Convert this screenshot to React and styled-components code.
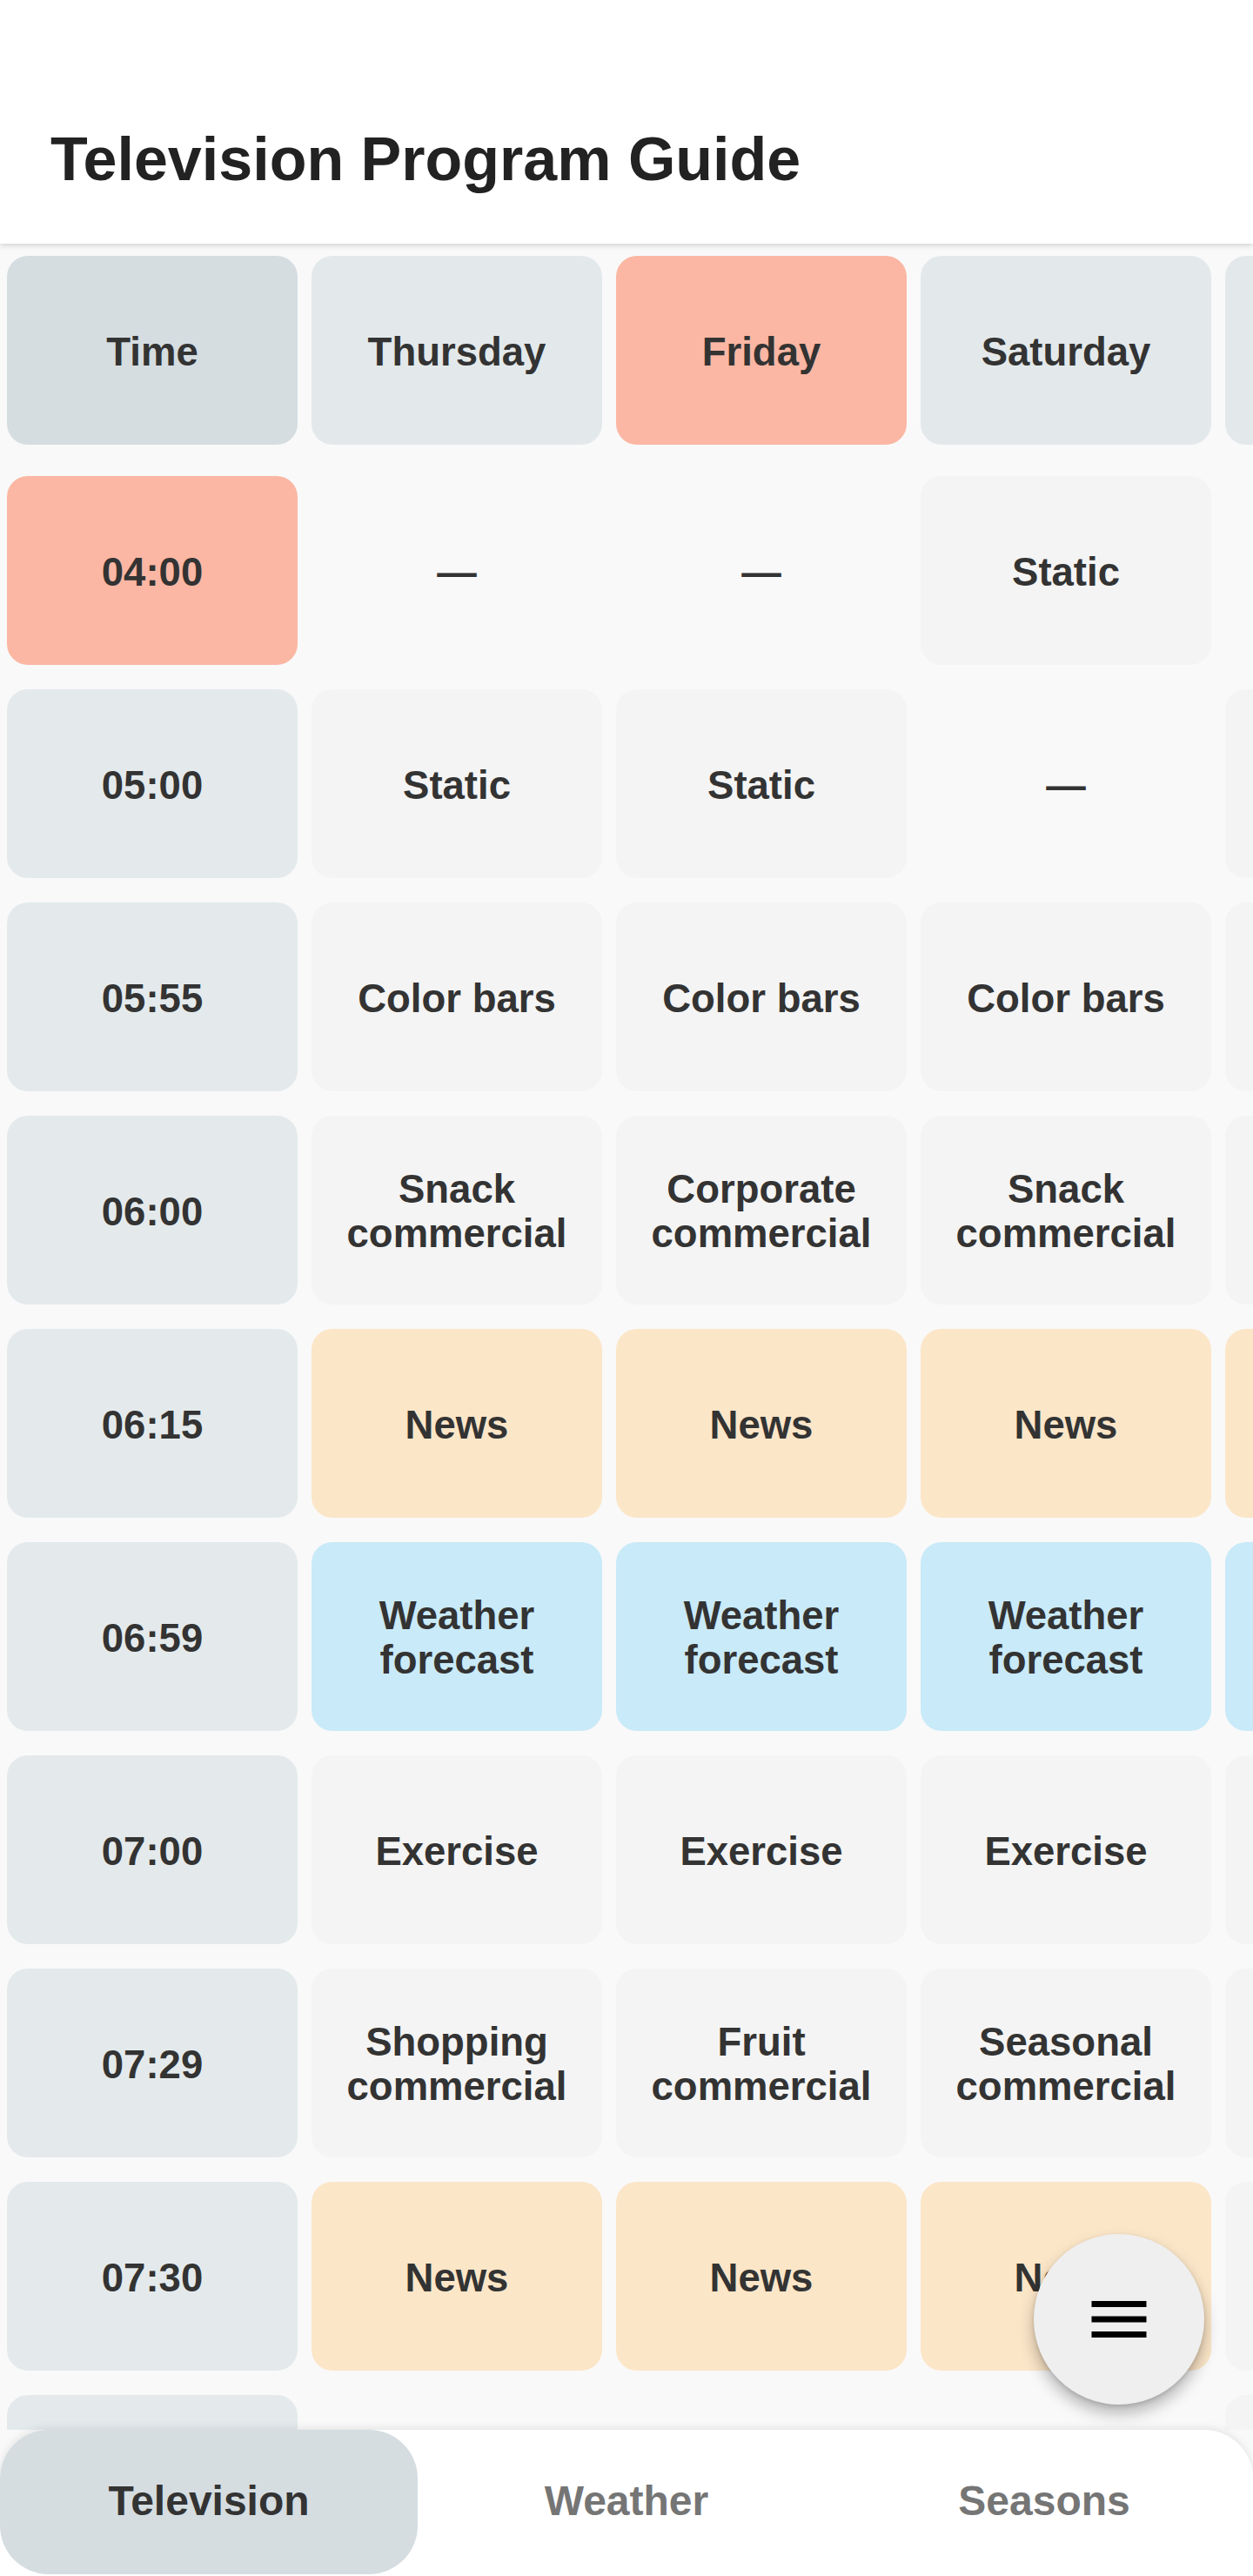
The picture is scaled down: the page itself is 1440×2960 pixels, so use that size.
import React from 'react'
import styled, { createGlobalStyle } from 'styled-components'

const GlobalStyle = createGlobalStyle`
  html, body {
    margin: 0;
    padding: 0;
    background: #f9f9f9;
  }
  * {
    box-sizing: border-box;
  }
`

const days = [
  { name: 'Thursday' },
  { name: 'Friday', today: true },
  { name: 'Saturday' },
  { name: 'Sunday' },
]

// kind: plain | empty | news | weather
const schedule = [
  { time: '04:00', now: true, slots: [['empty'], ['empty'], ['plain', 'Static'], ['empty']] },
  { time: '05:00', slots: [['plain', 'Static'], ['plain', 'Static'], ['empty'], ['plain', 'Static']] },
  { time: '05:55', slots: [['plain', 'Color bars'], ['plain', 'Color bars'], ['plain', 'Color bars'], ['plain', 'Color bars']] },
  { time: '06:00', slots: [['plain', 'Snack commercial'], ['plain', 'Corporate commercial'], ['plain', 'Snack commercial'], ['plain', 'Fruit commercial']] },
  { time: '06:15', slots: [['news', 'News'], ['news', 'News'], ['news', 'News'], ['news', 'News']] },
  { time: '06:59', slots: [['weather', 'Weather forecast'], ['weather', 'Weather forecast'], ['weather', 'Weather forecast'], ['weather', 'Weather forecast']] },
  { time: '07:00', slots: [['plain', 'Exercise'], ['plain', 'Exercise'], ['plain', 'Exercise'], ['plain', 'Exercise']] },
  { time: '07:29', slots: [['plain', 'Shopping commercial'], ['plain', 'Fruit commercial'], ['plain', 'Seasonal commercial'], ['plain', 'Snack commercial']] },
  { time: '07:30', slots: [['news', 'News'], ['news', 'News'], ['news', 'News'], ['plain', 'Cartoons']] },
  { time: '08:00', slots: [['empty'], ['empty'], ['empty'], ['plain', 'Cartoons']] },
]

const cellColors = {
  corner: '#d5dde1',
  head: '#e3e9eb',
  today: '#fbb7a3',
  time: '#e4eaec',
  plain: '#f4f4f4',
  news: '#fce6c8',
  weather: '#c9eaf8',
  empty: 'transparent',
}

const Screen = styled.div`
  width: 1440px;
  height: 2960px;
  display: flex;
  flex-direction: column;
  overflow: hidden;
  background: #f9f9f9;
  font-family: 'Liberation Sans', Arial, sans-serif;
`

const TopBar = styled.header`
  flex: 0 0 280px;
  background: #ffffff;
  padding: 143px 0 0 58px;
  box-shadow: 0 2px 6px rgba(0, 0, 0, 0.16);
  position: relative;
  z-index: 2;
`

const Title = styled.h1`
  margin: 0;
  font-size: 70px;
  line-height: 80px;
  font-weight: 700;
  color: #222222;
`

const Guide = styled.main`
  flex: 1;
  position: relative;
  overflow: hidden;
`

const Row = styled.div`
  display: flex;
  padding: ${(p) => (p.$head ? '14px 0 22px' : '14px 0')};
`

const Slot = styled.div`
  flex: 0 0 350px;
  padding: 0 8px;
`

const Cell = styled.div`
  height: 217px;
  border-radius: 24px;
  background: ${(p) => cellColors[p.$kind]};
  display: flex;
  align-items: center;
  justify-content: center;
  text-align: center;
  padding: 3px 20px 0;
  font-size: 45.5px;
  line-height: 51px;
  font-weight: 700;
  color: #333333;
`

const Fab = styled.button`
  position: absolute;
  right: 56px;
  bottom: 29px;
  width: 196px;
  height: 196px;
  border: none;
  border-radius: 50%;
  background: #efefef;
  box-shadow: 0 10px 18px rgba(0, 0, 0, 0.28), 0 2px 5px rgba(0, 0, 0, 0.12);
  display: flex;
  align-items: center;
  justify-content: center;
  padding: 0;
  z-index: 3;

  svg {
    width: 84px;
    height: 84px;
  }
`

const BottomNav = styled.nav`
  flex: 0 0 168px;
  display: grid;
  grid-template-columns: repeat(3, 1fr);
  background: #ffffff;
  border-radius: 56px 56px 0 0;
  box-shadow: 0 -3px 8px rgba(0, 0, 0, 0.08);
  position: relative;
  z-index: 2;
`

const Tab = styled.div`
  display: flex;
  align-items: center;
  justify-content: center;
  border-radius: 56px;
  height: 166px;
  padding-bottom: 4px;
  background: ${(p) => (p.$active ? '#d5dde1' : 'transparent')};
  color: ${(p) => (p.$active ? '#333333' : '#757575')};
  font-size: 48px;
  font-weight: 700;
`

const MenuIcon = () => (
  <svg viewBox="0 0 24 24">
    <path d="M3 18h18v-2H3v2zm0-5h18v-2H3v2zm0-7v2h18V6H3z" fill="#000" />
  </svg>
)

export default function App() {
  return (
    <>
      <GlobalStyle />
      <Screen>
        <TopBar>
          <Title>Television Program Guide</Title>
        </TopBar>
        <Guide>
          <Row $head>
            <Slot>
              <Cell $kind="corner">Time</Cell>
            </Slot>
            {days.map((d) => (
              <Slot key={d.name}>
                <Cell $kind={d.today ? 'today' : 'head'}>{d.name}</Cell>
              </Slot>
            ))}
          </Row>
          {schedule.map((r) => (
            <Row key={r.time}>
              <Slot>
                <Cell $kind={r.now ? 'today' : 'time'}>{r.time}</Cell>
              </Slot>
              {r.slots.map(([kind, label], i) => (
                <Slot key={i}>
                  <Cell $kind={kind}>{kind === 'empty' ? '—' : label}</Cell>
                </Slot>
              ))}
            </Row>
          ))}
          <Fab aria-label="Menu">
            <MenuIcon />
          </Fab>
        </Guide>
        <BottomNav>
          <Tab $active>Television</Tab>
          <Tab>Weather</Tab>
          <Tab>Seasons</Tab>
        </BottomNav>
      </Screen>
    </>
  )
}
